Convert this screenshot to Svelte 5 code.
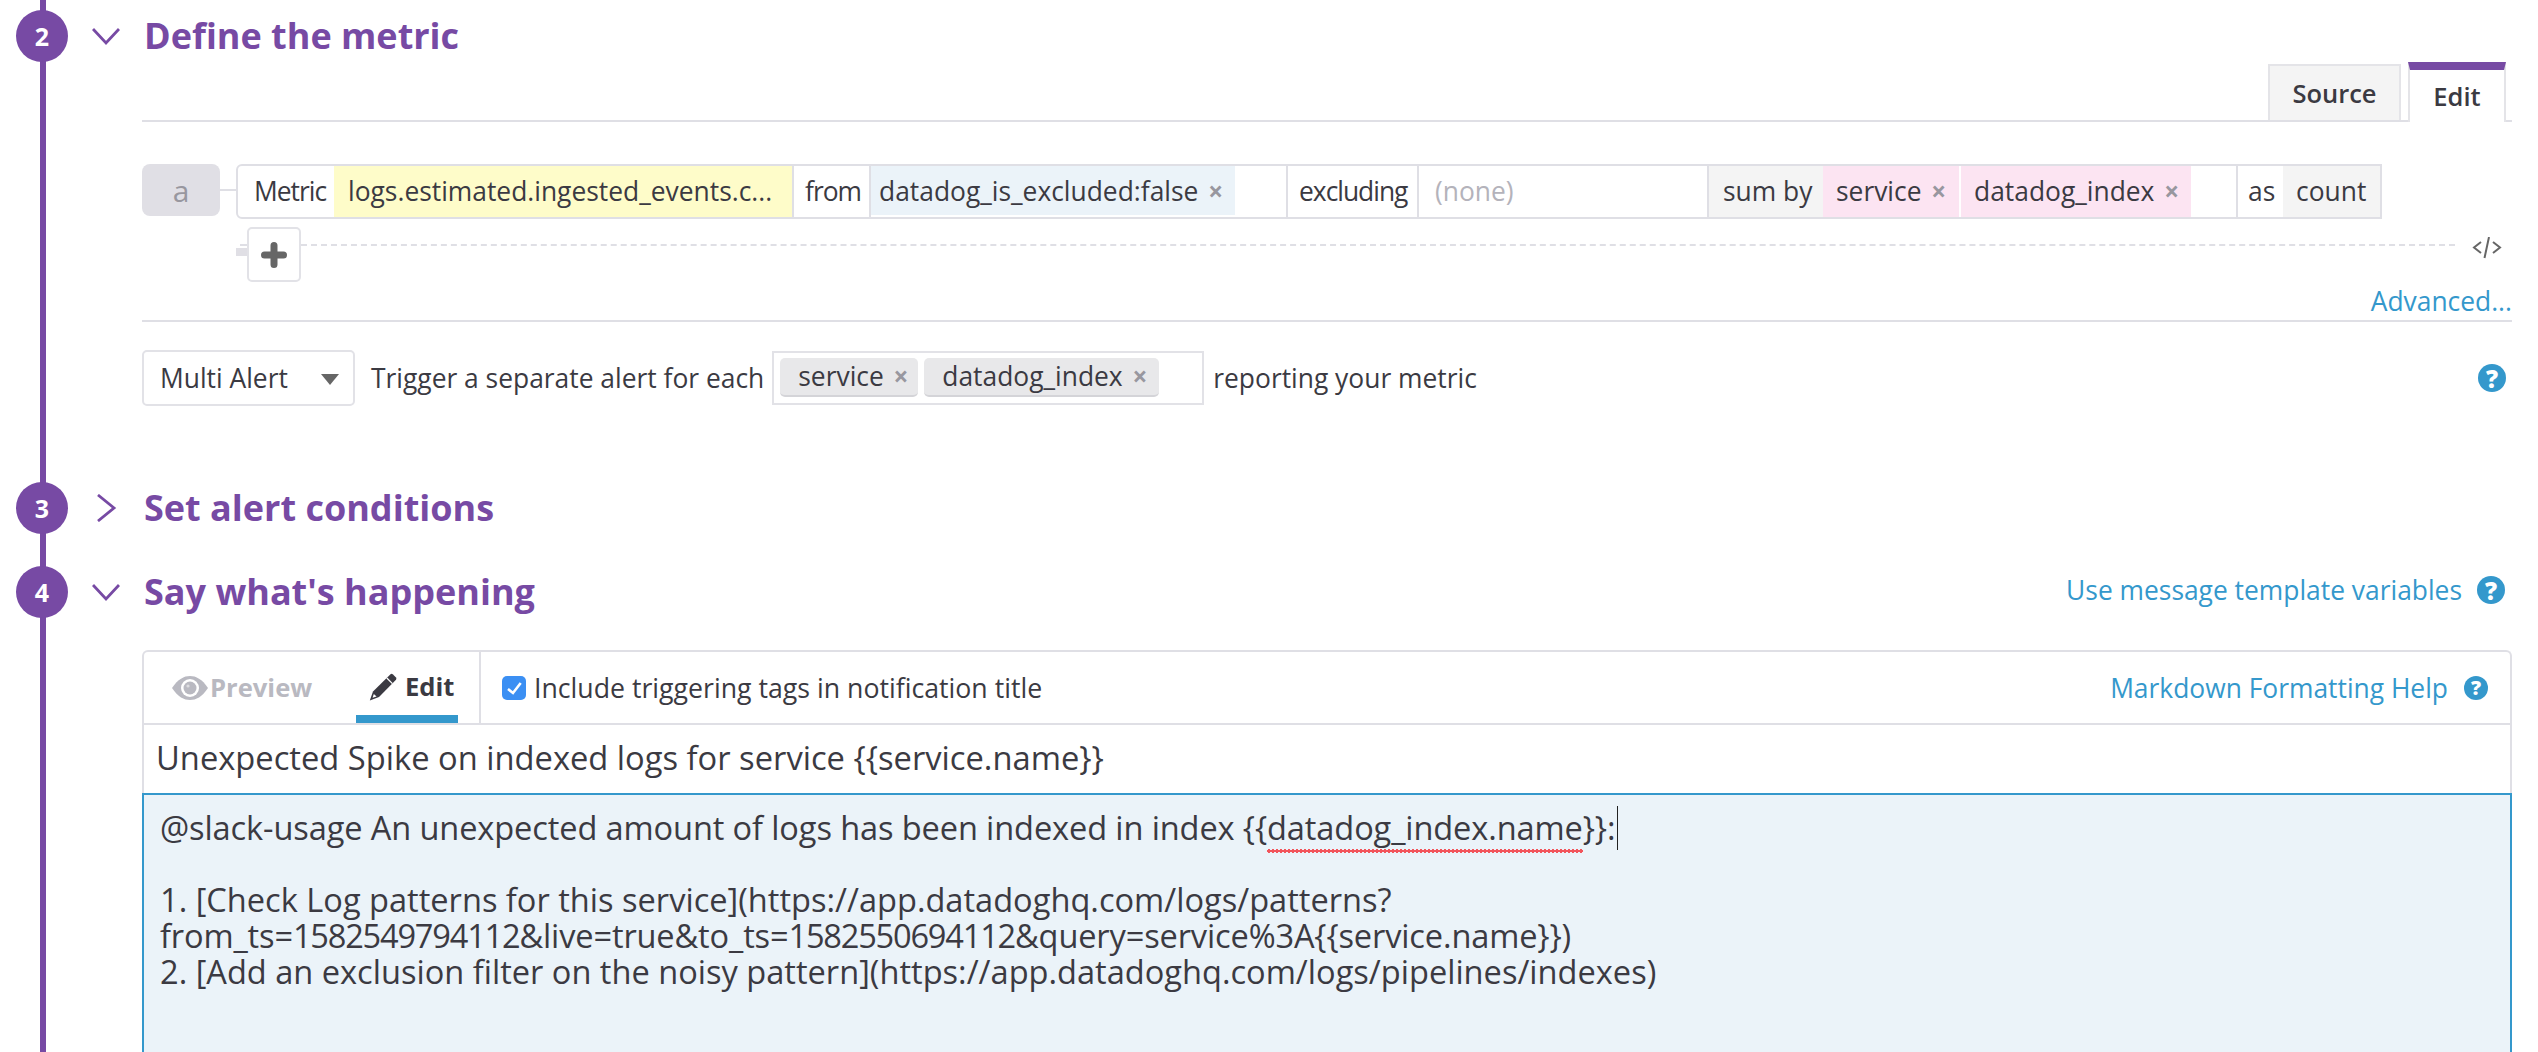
<script>
  const bodyLine1 = '1. [Check Log patterns for this service](https://app.datadoghq.com/logs/patterns?'
  const bodyLine3 = '2. [Add an exclusion filter on the noisy pattern](https://app.datadoghq.com/logs/pipelines/indexes)'
</script>

{#snippet chevron(open)}
  <svg class="chevron" width="28" height="28" viewBox="0 0 28 28" fill="none" stroke="#774aa4" stroke-width="2.8">
    {#if open}
      <path d="M1 7 L14 21 L27 7" />
    {:else}
      <path d="M6 1 L22 14 L6 27" />
    {/if}
  </svg>
{/snippet}

<div class="page">
  <div class="rail"></div>

  <section class="head first">
    <span class="num">2</span>
    {@render chevron(true)}
    <h2>Define the metric</h2>
  </section>

  <div class="tabs">
    <span class="tab source">Source</span>
    <span class="tab edit">Edit</span>
  </div>

  <div class="query-row">
    <span class="letter">a</span>
    <span class="stub"></span>
    <div class="query">
      <span class="seg metric tight">Metric</span>
      <span class="seg metric-name">logs.estimated.ingested_events.c...</span>
      <span class="seg from tight">from</span>
      <span class="seg filter"><span class="chip blue">datadog_is_excluded:false <i>×</i></span></span>
      <span class="seg excl tight">excluding</span>
      <span class="seg none">(none)</span>
      <span class="seg sumby">sum by</span>
      <span class="seg groups">
        <span class="chip pink service-chip">service <i>×</i></span>
        <span class="chip pink index-chip">datadog_index <i>×</i></span>
      </span>
      <span class="seg as">as</span>
      <span class="seg count">count</span>
    </div>
  </div>

  <div class="add-row">
    <span class="add-stub"></span>
    <span class="add">
      <svg width="26" height="26" viewBox="0 0 26 26"><path d="M13 3.5 V22.5 M3.5 13 H22.5" fill="none" stroke="#666" stroke-width="7" stroke-linecap="round" /></svg>
    </span>
    <span class="dashed"></span>
    <svg class="code" width="30" height="22" viewBox="0 0 30 22" fill="none" stroke="#666" stroke-width="2">
      <path d="M9 5 L2 10.5 L9 16 M21 5 L28 10.5 L21 16 M17 0 L12.5 21" />
    </svg>
  </div>

  <div class="advanced"><span class="link">Advanced...</span></div>

  <div class="multi-row">
    <span class="select">Multi Alert<span class="caret"></span></span>
    <span class="label">Trigger a separate alert for each</span>
    <span class="tagbox">
      <span class="tag service-tag">service <i>×</i></span>
      <span class="tag index-tag">datadog_index <i>×</i></span>
    </span>
    <span class="label after">reporting your metric</span>
    <span class="help big push">?</span>
  </div>

  <section class="head three">
    <span class="num">3</span>
    {@render chevron(false)}
    <h2>Set alert conditions</h2>
  </section>

  <section class="head four">
    <span class="num">4</span>
    {@render chevron(true)}
    <h2>Say what's happening</h2>
    <span class="link push raised">Use message template variables</span>
    <span class="help big raised">?</span>
  </section>

  <div class="editor">
    <div class="editor-bar">
      <span class="etab preview">
        <svg width="36" height="24" viewBox="0 0 36 24">
          <path d="M0 12 C6 3 12 0 18 0 C24 0 30 3 36 12 C30 21 24 24 18 24 C12 24 6 21 0 12 Z" fill="#b9b9c1" />
          <circle cx="18" cy="12" r="9" fill="#fff" />
          <circle cx="18" cy="12" r="6.5" fill="#b9b9c1" />
          <circle cx="16" cy="10" r="1.6" fill="#dcdce0" />
        </svg>
        Preview
      </span>
      <span class="etab active">
        <svg width="28" height="28" viewBox="0 0 28 28">
          <path d="M21.5 1.2 Q22.8 0.4 24 1.5 L27 4.5 Q27.8 5.6 27 6.8 L10 24 L0.8 27.5 L4 18.5 Z" fill="#3b3a42" />
          <path d="M17.8 5 L23.4 10.6" stroke="#fff" stroke-width="1.3" />
          <path d="M3.6 24.8 L4.8 21 L7.6 23.6 Z" fill="#fff" />
        </svg>
        Edit
      </span>
      <label class="include">
        <svg width="24" height="24" viewBox="0 0 24 24">
          <rect width="24" height="24" rx="5" fill="#3b8ff3" />
          <path d="M6 13 L11 17 L18.7 7" fill="none" stroke="#fff" stroke-width="2.6" />
        </svg>
        Include triggering tags in notification title
      </label>
      <span class="link md push">Markdown Formatting Help</span>
      <span class="help small">?</span>
    </div>
    <div class="subject">Unexpected Spike on indexed logs for service {'{{service.name}}'}</div>
    <div class="body">
      <div class="line first-line">@slack-usage An unexpected amount of logs has been indexed in index {'{{'}<span class="misspelt">datadog_index.name</span>{'}}'}:<span class="cursor"></span></div>
      <div class="line">&nbsp;</div>
      <div class="line">{bodyLine1}</div>
      <div class="line url-line">from_ts=<span class="digits">1582549794112</span>&amp;live=true&amp;to_ts=<span class="digits">1582550694112</span>&amp;query=service%3A{'{{service.name}}'})</div>
      <div class="line">{bodyLine3}</div>
    </div>
  </div>
</div>

<style>
  :global(body) { margin: 0; background: #fff; }
  .page {
    position: relative;
    height: 1052px;
    overflow: hidden;
    background: #fff;
    color: #3b3a42;
    font-family: "Open Sans", "Noto Sans", sans-serif;
    font-size: 26.4px;
    padding-right: 26px;
  }
  .rail { position: absolute; left: 40px; top: 0; bottom: 0; width: 6px; background: #774aa4; }

  .head { position: relative; display: flex; align-items: center; height: 52px; padding-left: 16px; padding-right: 7px; }
  .head.first { margin-top: 10px; }
  .head.three { margin-top: 76px; }
  .head.four { margin-top: 32px; }
  .num {
    width: 52px; height: 52px; border-radius: 50%; background: #774aa4; color: #fff;
    display: flex; align-items: center; justify-content: center;
    font-size: 25px; font-weight: 700; flex-shrink: 0;
  }
  .chevron { margin-left: 24px; flex-shrink: 0; }
  h2 { margin: 0 0 0 24px; font-size: 36px; font-weight: 700; color: #774aa4; line-height: 48px; }
  .push { margin-left: auto; }
  .link { color: #3498cc; font-size: 26.4px; }
  .raised { margin-bottom: 4px; }

  .help {
    display: inline-flex; align-items: center; justify-content: center;
    border-radius: 50%; background: #3498cc; color: #fff; font-weight: 800; flex-shrink: 0;
  }
  .help.big { width: 28px; height: 28px; font-size: 24px; }
  .help.small { width: 24px; height: 24px; font-size: 20px; margin-left: 16px; margin-right: 22px; }
  .head .link + .help { margin-left: 15px; }

  .tabs {
    margin-left: 142px; height: 58px;
    border-bottom: 2px solid #dfdfe5;
    display: flex; justify-content: flex-end; align-items: flex-end;
    padding-right: 6px; gap: 7px;
    font-weight: 600; font-size: 25.5px;
  }
  .tab { display: flex; align-items: center; justify-content: center; box-sizing: border-box; }
  .tab.source { width: 133px; height: 56px; background: #f4f4f4; border: 2px solid #e4e4e8; border-bottom: none; }
  .tab.edit {
    width: 98px; height: 60px; background: #fff; margin-bottom: -2px;
    border-top: 8px solid #774aa4; border-right: 2px solid #e4e4e8; border-left: 2px solid #e4e4e8;
  }

  .query-row { display: flex; align-items: flex-start; margin: 42px 0 0 142px; }
  .letter {
    width: 78px; height: 52px; border-radius: 8px; background: #e0dfe5; color: #98979f;
    display: flex; align-items: center; justify-content: center; font-size: 30px;
  }
  .stub { width: 16px; height: 2px; background: #dfdfe5; margin-top: 25px; }
  .query {
    display: flex; height: 51px; box-sizing: content-box;
    border: 2px solid #dfdfe5; border-radius: 6px 0 0 6px;
    line-height: 50px; white-space: nowrap;
  }
  .seg { display: block; box-sizing: border-box; flex-shrink: 0; }
  .tight { letter-spacing: -1px; }
  .metric { width: 96px; padding-left: 16px; }
  .metric-name { width: 458px; padding-left: 14px; background: #fefcc9; overflow: hidden; }
  .from { width: 79px; padding-left: 11px; border-left: 2px solid #dfdfe5; border-right: 2px solid #dfdfe5; }
  .filter { width: 415px; padding-bottom: 2px; }
  .excl { width: 133px; padding-left: 11px; border-left: 2px solid #dfdfe5; border-right: 2px solid #dfdfe5; }
  .none { width: 288px; padding-left: 16px; color: #b4b3bb; }
  .sumby { width: 116px; padding-left: 14px; background: #f4f4f4; border-left: 2px solid #dfdfe5; }
  .groups { width: 415px; display: flex; gap: 2px; border-right: 2px solid #dfdfe5; }
  .as { width: 45px; padding-left: 10px; }
  .count { width: 97px; padding-left: 13px; background: #f4f4f4; }
  .chip { display: block; height: 100%; box-sizing: border-box; }
  .chip i, .tag i { font-style: normal; font-weight: 700; color: #98979f; font-size: 26px; margin-left: 3px; }
  .blue { width: 364px; padding-left: 8px; background: #ebf3f9; height: 49px; }
  .pink { background: #fce4f2; padding-left: 13px; }
  .service-chip { width: 136px; }
  .index-chip { width: 230px; }

  .add-row { display: flex; align-items: flex-start; margin: 8px 0 0 236px; height: 55px; position: relative; }
  .add-row::before { content: ""; position: absolute; left: 4px; top: 17px; width: 7px; height: 2px; background: #dfdfe5; }
  .add-stub { width: 11px; height: 8px; background: #e0dfe5; margin-top: 21px; }
  .add {
    width: 54px; height: 55px; box-sizing: border-box;
    border: 2px solid #e2e2e7; border-radius: 5px; background: #fff;
    display: flex; align-items: center; justify-content: center;
  }
  .dashed { flex: 1; border-top: 2px dashed #dfdfe5; margin-top: 17px; }
  .code { margin: 10px 10px 0 17px; }

  .advanced {
    margin-left: 142px; height: 38px; box-sizing: content-box;
    border-bottom: 2px solid #dfdfe5;
    display: flex; justify-content: flex-end; align-items: center;
  }

  .multi-row { display: flex; align-items: center; margin: 28px 0 0 142px; height: 56px; padding-right: 6px; }
  .select {
    width: 213px; height: 56px; box-sizing: border-box;
    border: 2px solid #e2e2e7; border-radius: 5px;
    display: flex; align-items: center; padding-left: 16px; position: relative;
  }
  .caret {
    position: absolute; right: 14px; top: 22px; width: 0; height: 0;
    border-left: 9px solid transparent; border-right: 9px solid transparent; border-top: 11px solid #666;
  }
  .label { margin-left: 16px; }
  .label.after { margin-left: 9px; }
  .tagbox {
    width: 432px; height: 54px; box-sizing: border-box; margin-left: 8px;
    border: 2px solid #e2e2e7; padding: 5px 6px;
    display: flex; gap: 6px; align-items: flex-start;
  }
  .tag {
    height: 39px; box-sizing: border-box; padding-left: 18px; line-height: 37px;
    background: #e8e8ea; border-bottom: 2px solid #d4d4d8; border-radius: 5px;
  }
  .service-tag { width: 138px; }
  .index-tag { width: 235px; }

  .editor {
    margin: 32px 0 0 142px; height: 500px;
    border: 2px solid #dfdfe5; border-radius: 6px 6px 0 0;
    border-bottom: none;
  }
  .editor-bar {
    display: flex; align-items: stretch; height: 71px;
    border-bottom: 2px solid #dfdfe5;
  }
  .etab { display: flex; align-items: center; gap: 2px; font-weight: 700; font-size: 25.6px; box-sizing: border-box; }
  .etab.preview { width: 212px; padding-left: 28px; color: #b9b9c1; }
  .etab.active { width: 102px; padding-left: 13px; gap: 8px; border-bottom: 8px solid #3498cc; padding-top: 6px; margin-bottom: 0; }
  .include {
    display: flex; align-items: center; gap: 8px; font-size: 26.7px;
    border-left: 2px solid #dfdfe5; margin-left: 21px; padding-left: 21px;
  }
  .md { align-self: center; }
  .help.small { align-self: center; }
  .subject {
    height: 68px; line-height: 66px; padding-left: 12px; font-size: 32.7px; box-sizing: border-box;
  }
  .body {
    margin: 0 -2px 0 -2px; height: 400px; box-sizing: border-box;
    border: 2px solid #3498cc; background: #ebf3f9;
    padding: 15px 16px; font-size: 32.6px; line-height: 36px;
  }
  .line { white-space: nowrap; }
  .first-line { letter-spacing: -0.12px; }
  .url-line { letter-spacing: -0.15px; }
  .digits { letter-spacing: -1.2px; }
  .misspelt { position: relative; }
  .misspelt::after {
    content: ""; position: absolute; left: 0; right: 0; bottom: -3px; height: 4px;
    background: radial-gradient(circle at 2px 2px, #f2545b 1.6px, transparent 2px) 0 0 / 4px 4px repeat-x;
  }
  .cursor { position: absolute; width: 1px; height: 44px; background: #222; margin-top: -4px; margin-left: 2px; }
</style>
